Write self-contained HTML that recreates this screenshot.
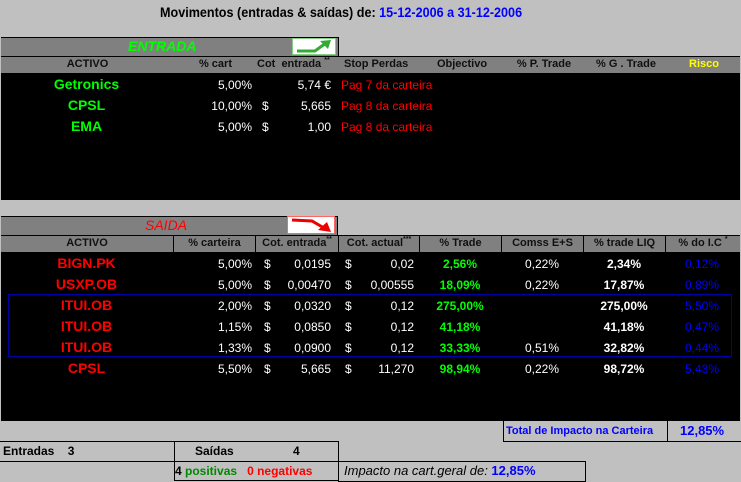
<!DOCTYPE html><html><head><meta charset="utf-8"><style>
*{margin:0;padding:0;box-sizing:border-box}
body{width:741px;height:481px;background:#c0c0c0;position:relative;overflow:hidden;font-family:"Liberation Sans",Arial,sans-serif}
.a{position:absolute;white-space:nowrap}
.blk{position:absolute;background:#000}
.hdr{position:absolute;background:#808080;font-weight:bold;font-size:11px;color:#101010;border-top:1px solid #000;border-bottom:1px solid #000}
.c{position:absolute;top:0;height:16px;line-height:15px;text-align:center}
.s{font-size:7px;vertical-align:top;line-height:8px}
.w{color:#fff;font-size:12px}
.g{color:#0f0;font-weight:bold;font-size:14px}
.r{color:#f00;font-weight:bold;font-size:14px}
.gb{color:#0f0;font-weight:bold;font-size:12px}
.wb{color:#fff;font-weight:bold;font-size:12px}
.bl{color:#00f;font-size:12px}
.rd{color:#f00;font-size:12px}
.bx{position:absolute;border:1px solid #000}
</style></head><body>
<div class="a" style="left:160px;top:4px;font-size:14px;font-weight:bold;transform:scaleX(.9);transform-origin:left">Movimentos (entradas &amp; saídas) de: <span style="color:#00f">15-12-2006 a 31-12-2006</span></div>

<!-- ENTRADA -->
<div class="a" style="left:1px;top:37px;width:338px;height:20px;background:#808080;border-top:1px solid #000;border-right:1px solid #000"></div>
<div class="a" style="left:128px;top:38px;color:#0f0;font-style:italic;font-weight:bold;font-size:14px">ENTRADA</div>
<div class="a" style="left:292px;top:38px;width:44px;height:17px;background:#fff;border:1px solid #8c8"><svg width="42" height="15"><path d="M4 12 L22 12 L33 4" stroke="#3a3" stroke-width="3" fill="none"/><path d="M27 2 L38 1 L35 10 Z" fill="#3a3"/></svg></div>
<div class="hdr" style="left:1px;top:56px;width:739px;height:18px">
<div class="c" style="left:0;width:173px">ACTIVO</div>
<div class="c" style="left:173px;width:82px;text-align:right;padding-right:24px">% cart</div>
<div class="a" style="left:256px;top:0;line-height:15px">Cot&nbsp; entrada <span class="s">**</span></div>
<div class="a" style="left:343px;top:0;line-height:15px">Stop Perdas</div>
<div class="c" style="left:420px;width:82px">Objectivo</div>
<div class="c" style="left:502px;width:82px">% P. Trade</div>
<div class="c" style="left:584px;width:82px">% G . Trade</div>
<div class="c" style="left:666px;width:74px;color:#ff0">Risco</div>
</div>
<div class="blk" style="left:1px;top:74px;width:739px;height:126px"></div>
<div class="a g" style="left:0;width:173px;text-align:center;top:76px">Getronics</div>
<div class="a g" style="left:0;width:173px;text-align:center;top:97px">CPSL</div>
<div class="a g" style="left:0;width:173px;text-align:center;top:118px">EMA</div>
<div class="a w" style="right:489px;top:78px">5,00%</div>
<div class="a w" style="right:489px;top:99px">10,00%</div>
<div class="a w" style="right:489px;top:120px">5,00%</div>
<div class="a w" style="left:262px;top:99px">$</div>
<div class="a w" style="left:262px;top:120px">$</div>
<div class="a w" style="right:410px;top:78px">5,74 €</div>
<div class="a w" style="right:410px;top:99px">5,665</div>
<div class="a w" style="right:410px;top:120px">1,00</div>
<div class="a rd" style="left:341px;top:78px">Pag 7 da carteira</div>
<div class="a rd" style="left:341px;top:99px">Pag 8 da carteira</div>
<div class="a rd" style="left:341px;top:120px">Pag 8 da carteira</div>

<!-- SAIDA -->
<div class="a" style="left:1px;top:216px;width:337px;height:20px;background:#808080;border-top:1px solid #000;border-right:1px solid #000"></div>
<div class="a" style="left:145px;top:217px;color:#f00;font-style:italic;font-size:14px">SAIDA</div>
<div class="a" style="left:287px;top:216px;width:48px;height:18px;background:#fff;border:1px solid #f66"><svg width="46" height="16"><path d="M4 3 L24 4 L36 11" stroke="#e00" stroke-width="3" fill="none"/><path d="M30 13 L43 15 L39 5 Z" fill="#e00"/></svg></div>
<div class="hdr" style="left:1px;top:235px;width:739px;height:18px">
<div class="c" style="left:0;width:173px;border-right:1px solid #000">ACTIVO</div>
<div class="c" style="left:173px;width:82px;border-right:1px solid #000">% carteira</div>
<div class="c" style="left:255px;width:83px;border-right:1px solid #000">Cot. entrada<span class="s">**</span></div>
<div class="c" style="left:338px;width:81px;border-right:1px solid #000">Cot. actual<span class="s">***</span></div>
<div class="c" style="left:419px;width:82px;border-right:1px solid #000">% Trade</div>
<div class="c" style="left:501px;width:82px;border-right:1px solid #000">Comss E+S</div>
<div class="c" style="left:583px;width:82px;border-right:1px solid #000">% trade LIQ</div>
<div class="c" style="left:665px;width:74px">% do I.C <span class="s">*</span></div>
</div>
<div class="blk" style="left:1px;top:253px;width:739px;height:168px"></div>
<div class="a" style="left:8px;top:294px;width:724px;height:63px;border:1px solid #00a"></div>
<div style="position:absolute;left:0;top:255px">
<div class="a r" style="left:0;width:173px;text-align:center;top:0">BIGN.PK</div>
<div class="a r" style="left:0;width:173px;text-align:center;top:21px">USXP.OB</div>
<div class="a r" style="left:0;width:173px;text-align:center;top:42px">ITUI.OB</div>
<div class="a r" style="left:0;width:173px;text-align:center;top:63px">ITUI.OB</div>
<div class="a r" style="left:0;width:173px;text-align:center;top:84px">ITUI.OB</div>
<div class="a r" style="left:0;width:173px;text-align:center;top:105px">CPSL</div>
</div>
<div style="position:absolute;left:0;top:257px;width:741px">
<div class="a w" style="right:489px;top:0">5,00%</div><div class="a w" style="left:264px;top:0">$</div><div class="a w" style="right:410px;top:0">0,0195</div><div class="a w" style="left:345px;top:0">$</div><div class="a w" style="right:327px;top:0">0,02</div><div class="a gb" style="left:419px;width:82px;text-align:center;top:0">2,56%</div><div class="a w" style="left:501px;width:82px;text-align:center;top:0">0,22%</div><div class="a wb" style="left:583px;width:82px;text-align:center;top:0">2,34%</div><div class="a bl" style="left:665px;width:74px;text-align:center;top:0">0,12%</div>
<div class="a w" style="right:489px;top:21px">5,00%</div><div class="a w" style="left:264px;top:21px">$</div><div class="a w" style="right:410px;top:21px">0,00470</div><div class="a w" style="left:345px;top:21px">$</div><div class="a w" style="right:327px;top:21px">0,00555</div><div class="a gb" style="left:419px;width:82px;text-align:center;top:21px">18,09%</div><div class="a w" style="left:501px;width:82px;text-align:center;top:21px">0,22%</div><div class="a wb" style="left:583px;width:82px;text-align:center;top:21px">17,87%</div><div class="a bl" style="left:665px;width:74px;text-align:center;top:21px">0,89%</div>
<div class="a w" style="right:489px;top:42px">2,00%</div><div class="a w" style="left:264px;top:42px">$</div><div class="a w" style="right:410px;top:42px">0,0320</div><div class="a w" style="left:345px;top:42px">$</div><div class="a w" style="right:327px;top:42px">0,12</div><div class="a gb" style="left:419px;width:82px;text-align:center;top:42px">275,00%</div><div class="a wb" style="left:583px;width:82px;text-align:center;top:42px">275,00%</div><div class="a bl" style="left:665px;width:74px;text-align:center;top:42px">5,50%</div>
<div class="a w" style="right:489px;top:63px">1,15%</div><div class="a w" style="left:264px;top:63px">$</div><div class="a w" style="right:410px;top:63px">0,0850</div><div class="a w" style="left:345px;top:63px">$</div><div class="a w" style="right:327px;top:63px">0,12</div><div class="a gb" style="left:419px;width:82px;text-align:center;top:63px">41,18%</div><div class="a wb" style="left:583px;width:82px;text-align:center;top:63px">41,18%</div><div class="a bl" style="left:665px;width:74px;text-align:center;top:63px">0,47%</div>
<div class="a w" style="right:489px;top:84px">1,33%</div><div class="a w" style="left:264px;top:84px">$</div><div class="a w" style="right:410px;top:84px">0,0900</div><div class="a w" style="left:345px;top:84px">$</div><div class="a w" style="right:327px;top:84px">0,12</div><div class="a gb" style="left:419px;width:82px;text-align:center;top:84px">33,33%</div><div class="a w" style="left:501px;width:82px;text-align:center;top:84px">0,51%</div><div class="a wb" style="left:583px;width:82px;text-align:center;top:84px">32,82%</div><div class="a bl" style="left:665px;width:74px;text-align:center;top:84px">0,44%</div>
<div class="a w" style="right:489px;top:105px">5,50%</div><div class="a w" style="left:264px;top:105px">$</div><div class="a w" style="right:410px;top:105px">5,665</div><div class="a w" style="left:345px;top:105px">$</div><div class="a w" style="right:327px;top:105px">11,270</div><div class="a gb" style="left:419px;width:82px;text-align:center;top:105px">98,94%</div><div class="a w" style="left:501px;width:82px;text-align:center;top:105px">0,22%</div><div class="a wb" style="left:583px;width:82px;text-align:center;top:105px">98,72%</div><div class="a bl" style="left:665px;width:74px;text-align:center;top:105px">5,43%</div>
</div>

<!-- bottom -->
<div class="bx" style="left:503px;top:421px;width:165px;height:21px;border-top:none"></div>
<div class="bx" style="left:667px;top:421px;width:74px;height:21px;border-top:none;border-right:none"></div>
<div class="a" style="left:506px;top:425px;color:#00f;font-weight:bold;font-size:11px">Total de Impacto na Carteira</div>
<div class="a" style="left:680px;top:423px;color:#00f;font-size:13px;font-weight:bold">12,85%</div>
<div class="a" style="left:0;top:441px;width:338px;height:21px;border-top:1px solid #000;border-bottom:1px solid #000"></div>
<div class="bx" style="left:174px;top:441px;width:165px;height:40px"></div>
<div class="bx" style="left:338px;top:461px;width:248px;height:21px"></div>
<div class="a" style="left:3px;top:444px;font-weight:bold;font-size:12px">Entradas &nbsp;&nbsp;&nbsp;3</div>
<div class="a" style="left:195px;top:444px;font-weight:bold;font-size:12px">Saídas</div>
<div class="a" style="left:293px;top:444px;font-weight:bold;font-size:12px">4</div>
<div class="a" style="left:175px;top:464px;font-weight:bold;font-size:12px">4 <span style="color:#080">positivas</span> &nbsp;&nbsp;<span style="color:#f00">0 negativas</span></div>
<div class="a" style="left:344px;top:463px;font-style:italic;font-size:13px">Impacto na cart.geral de: <span style="color:#00f;font-style:normal;font-weight:bold;font-size:13px">12,85%</span></div>
</body></html>
